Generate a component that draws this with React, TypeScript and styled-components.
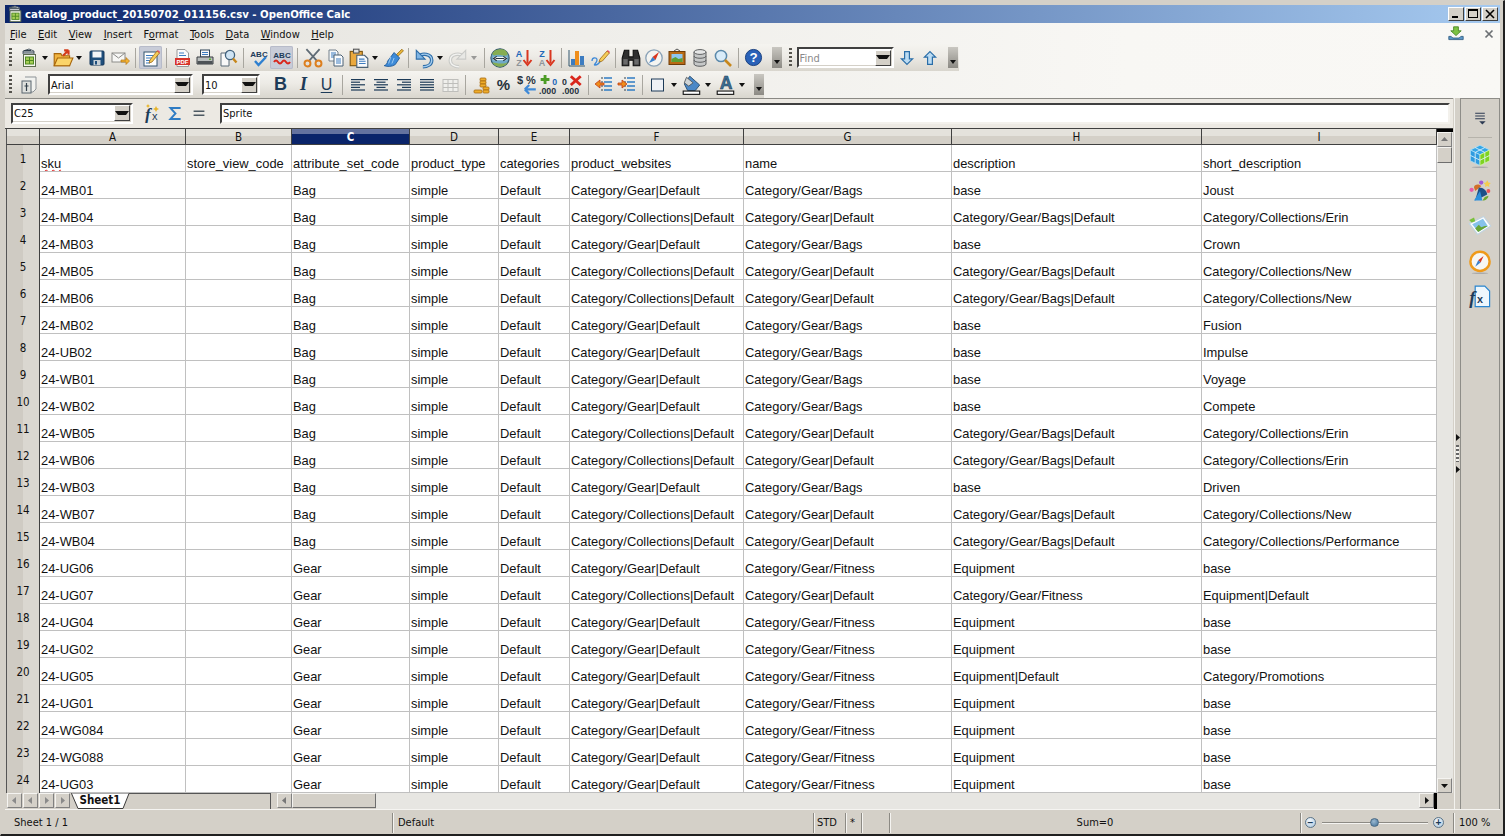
import React from 'react';
import styled, { createGlobalStyle } from 'styled-components';

const GlobalStyle = createGlobalStyle`
  html, body { margin: 0; padding: 0; background: #000; }
  * { box-sizing: border-box; }
`;

const UI_FONT = '"DejaVu Sans Condensed", "Noto Sans", sans-serif';
const CELL_FONT = '"Liberation Sans", Arial, sans-serif';

const Window = styled.div`
  width: 1505px;
  height: 836px;
  overflow: hidden;
  display: flex;
  flex-direction: column;
  background: #d4d0c8;
  padding: 4px 3px 0 4px;
  border-top: 1px solid #d4d0c8;
  border-left: 1px solid #d4d0c8;
  border-right: 2px solid #202020;
  border-bottom: 2px solid #202020;
  font-family: ${UI_FONT};
  color: #111;
`;

const TitleBar = styled.div`
  height: 18px;
  flex: none;
  display: flex;
  align-items: center;
  padding: 0 2px 0 1px;
  background: linear-gradient(90deg, #0a246a, #a6caf0);
  color: #fff;
  font-weight: 700;
  font-size: 11.3px;
`;

const TitleText = styled.span`
  flex: 1;
  margin-left: 1px;
`;

const WinButton = styled.div`
  width: 16px;
  height: 14px;
  margin-left: 1px;
  background: #d4d0c8;
  border: 1px solid;
  border-color: #fff #404040 #404040 #fff;
  display: flex;
  align-items: center;
  justify-content: center;
`;

const Chrome = styled.div`
  flex: none;
  background: linear-gradient(90deg, #e2e0da 0%, #eeede9 35%, #f8f7f4 75%, #f9f8f5 100%);
`;

const MenuBar = styled.div`
  height: 21px;
  display: flex;
  align-items: center;
  gap: 11.5px;
  padding: 1px 0 0 5px;
  font-size: 11px;
`;

const MenuItem = styled.span`
  u { text-decoration-thickness: 1px; text-underline-offset: 1px; }
`;

const MenuRight = styled.div`
  margin-left: auto;
  display: flex;
  align-items: center;
  gap: 20px;
  padding-right: 6px;
`;

const Toolbar = styled.div<{ $width: number }>`
  height: 27px;
  width: ${p => p.$width}px;
  display: flex;
  align-items: center;
  padding-left: 2px;
  background: linear-gradient(180deg, #f5f4f0 0%, #edebe6 45%, #d9d6ce 100%);
`;

const Grip = styled.div<{ $ml?: number }>`
  width: 3px;
  height: 19px;
  flex: none;
  margin-left: ${p => p.$ml ?? 2}px;
  margin-right: 5px;
  background: repeating-linear-gradient(180deg, #55534d 0 2px, transparent 2px 4px);
`;

const ToolButton = styled.div<{ $active?: boolean }>`
  width: 23px;
  height: 23px;
  flex: none;
  display: flex;
  align-items: center;
  justify-content: center;
  background: ${p => (p.$active ? '#c8ccd8' : 'transparent')};
  box-shadow: ${p => (p.$active ? 'inset 0 0 0 1px #b7bbc9' : 'none')};
  border-radius: 2px;
`;

const ArrowSlot = styled.div`
  width: 11px;
  height: 23px;
  flex: none;
  display: flex;
  align-items: center;
  padding-left: 2px;
`;

const DropTri = styled.span<{ $off?: boolean }>`
  width: 0;
  height: 0;
  border-left: 3.5px solid transparent;
  border-right: 3.5px solid transparent;
  border-top: 4px solid ${p => (p.$off ? '#9a9a98' : '#111')};
`;

const Sep = styled.div`
  width: 8px;
  height: 20px;
  flex: none;
  display: flex;
  justify-content: center;
  &::after { content: ''; width: 1px; background: #a8a69f; }
`;

const Overflow = styled.div<{ $ml: number }>`
  width: 10px;
  height: 21px;
  flex: none;
  margin-left: ${p => p.$ml}px;
  background: linear-gradient(180deg, #c9c7c1 0%, #8c8a84 100%);
  display: flex;
  align-items: flex-end;
  justify-content: center;
  padding-bottom: 4px;
`;

const Combo = styled.div<{ $width: number; $ml?: number; $mr?: number; $muted?: boolean }>`
  width: ${p => p.$width}px;
  height: 21px;
  flex: none;
  margin-left: ${p => p.$ml ?? 0}px;
  margin-right: ${p => p.$mr ?? 0}px;
  display: flex;
  align-items: center;
  background: #fff;
  border: 2px solid;
  border-color: #404040 #fff #fff #404040;
  box-shadow: inset -1px -1px 0 #d4d0c8;
  font-size: 11px;
  padding-left: 1px;
  color: ${p => (p.$muted ? '#8a8a8a' : '#111')};
  span { flex: 1; padding-top: 1px; }
`;

const ComboButton = styled.div`
  width: 16px;
  height: 16px;
  margin-right: 1px;
  background: #d4d0c8;
  border: 1px solid;
  border-color: #fff #404040 #404040 #fff;
  display: flex;
  align-items: center;
  justify-content: center;
`;

const GlyphB = styled.span`
  font: 700 18px ${CELL_FONT};
  color: #1d3b58;
`;
const GlyphI = styled.span`
  font: italic 700 18px "Liberation Serif", serif;
  color: #1d3b58;
`;
const GlyphU = styled.span`
  font: 400 16px ${CELL_FONT};
  color: #1d3b58;
  text-decoration: underline;
  text-underline-offset: 2px;
`;
const GlyphPct = styled.span`
  font: 700 15px ${CELL_FONT};
  color: #26323c;
`;

const FormulaBar = styled.div`
  height: 30px;
  flex: none;
  display: flex;
  align-items: center;
  padding: 0 3px 1px 6px;
  border-top: 1px solid #8a8984;
  background: #ece9e3;
`;

const FormulaIcons = styled.div`
  width: 87px;
  flex: none;
  display: flex;
  align-items: center;
  padding-left: 9px;
`;

const FormulaButton = styled.div<{ $ml?: number }>`
  width: 22px;
  height: 22px;
  flex: none;
  margin-left: ${p => p.$ml ?? 0}px;
  display: flex;
  align-items: center;
  justify-content: center;
`;

const FormulaInput = styled.div`
  flex: 1;
  height: 21px;
  background: #fff;
  border: 2px solid;
  border-color: #404040 #f3f1ec #f3f1ec #404040;
  font-size: 11px;
  display: flex;
  align-items: center;
  padding-left: 1px;
`;

const Workspace = styled.div`
  flex: 1;
  min-height: 0;
  display: flex;
  background: #d4d0c8;
`;

const Main = styled.div`
  flex: 1;
  min-width: 0;
  display: flex;
  flex-direction: column;
`;

const SheetArea = styled.div`
  flex: 1;
  min-height: 0;
  display: flex;
  padding-left: 1px;
  border-top: 1px solid #404040;
`;

const GridWrap = styled.div`
  width: 1431px;
  flex: none;
  display: flex;
  flex-direction: column;
`;

const Grid = styled.div`
  flex: 1;
  min-height: 0;
  overflow: hidden;
  display: grid;
  grid-template-columns: 34px 146px 106px 118px 89px 71px 174px 208px 250px 235px;
  grid-auto-rows: 27px;
  grid-template-rows: 16px;
  background: #fff;
  font: 400 12.9px ${CELL_FONT};
  color: #111;
`;

const Corner = styled.div`
  background: linear-gradient(180deg, #e4e2dc 0 7px, #d4d0c8 7px);
  border-left: 1px solid #555;
  border-bottom: 1px solid #404040;
  border-right: 1px solid #404040;
`;

const ColHead = styled.div<{ $selected?: boolean }>`
  display: flex;
  align-items: center;
  justify-content: center;
  font-size: 11.5px;
  padding-top: 1px;
  border-bottom: 1px solid #404040;
  border-right: 1px solid #404040;
  background: ${p =>
    p.$selected
      ? 'linear-gradient(180deg, #64729f 0 5px, #0a246a 5px)'
      : 'linear-gradient(180deg, #e4e2dc 0 7px, #d4d0c8 7px)'};
  color: ${p => (p.$selected ? '#fff' : '#111')};
  font-weight: ${p => (p.$selected ? 700 : 400)};
  font-family: ${UI_FONT};
`;

const RowHead = styled.div`
  background: linear-gradient(90deg, #cfcbc3 0 16px, #dad7d0 16px);
  border-left: 1px solid #555;
  border-right: 1px solid #404040;
  display: flex;
  align-items: center;
  justify-content: center;
  padding-top: 1px;
  font-size: 11.5px;
  font-family: ${UI_FONT};
`;

const Cell = styled.div`
  border-right: 1px solid #c0c0c0;
  border-bottom: 1px solid #c0c0c0;
  display: flex;
  align-items: flex-end;
  padding-left: 1px;
  white-space: nowrap;
  overflow: hidden;
  line-height: 15px;
`;

const Misspelled = styled.span`
  text-decoration: underline wavy #e02020 1px;
  text-underline-offset: 1px;
`;

const SheetStrip = styled.div`
  height: 16px;
  flex: none;
  display: flex;
  padding-left: 1px;
  background: #d4d0c8;
`;

const NavButton = styled.div`
  width: 15px;
  height: 15px;
  flex: none;
  margin-right: 1px;
  background: #d4d0c8;
  border: 1px solid;
  border-color: #f5f4f1 #808080 #808080 #f5f4f1;
  display: flex;
  align-items: center;
  justify-content: center;
`;

const TabArea = styled.div`
  width: 200px;
  flex: none;
  position: relative;
  border-top: 1px solid #555;
  border-right: 1px solid #555;
`;

const Tab = styled.div`
  position: absolute;
  left: 0;
  top: -1px;
  width: 58px;
  height: 16px;
  font: 700 11.5px/15px ${UI_FONT};
  text-align: center;
`;

const TabOutline = styled.svg`
  position: absolute;
  left: 0;
  top: -1px;
`;

const HScrollSpacer = styled.div`
  width: 6px;
  flex: none;
`;

const ScrollButton = styled.div`
  width: 15px;
  height: 15px;
  flex: none;
  background: #d4d0c8;
  border: 1px solid;
  border-color: #f5f4f1 #808080 #808080 #f5f4f1;
  display: flex;
  align-items: center;
  justify-content: center;
`;

const ScrollThumb = styled.div<{ $w: number; $h: number }>`
  flex: none;
  width: ${p => p.$w}px;
  height: ${p => p.$h}px;
  background: #d4d0c8;
  border: 1px solid;
  border-color: #f5f4f1 #6e6e6e #6e6e6e #f5f4f1;
`;

const HTrack = styled.div`
  flex: 1;
  display: flex;
  justify-content: flex-end;
  background: #e7e6e2;
`;

const BlackEdge = styled.div`
  width: 3px;
  height: 16px;
  background: #000;
  flex: none;
`;

const VCol = styled.div`
  width: 16px;
  flex: none;
  background: #d4d0c8;
  display: flex;
  flex-direction: column;
`;

const VScroll = styled.div`
  flex: 1;
  min-height: 0;
  display: flex;
  flex-direction: column;
  border-top: 3px solid #000;
  margin-bottom: 16px;
  background: #e7e6e2;
`;

const VTrack = styled.div`
  flex: 1;
`;

const Splitter = styled.div`
  width: 7px;
  flex: none;
  margin-left: 1px;
  border-right: 1px solid #8e8d88;
  border-left: 1px solid #f3f2ee;
  display: flex;
  flex-direction: column;
  align-items: center;
  justify-content: center;
  gap: 2px;
  color: #111;
`;

const SplitDots = styled.div`
  width: 3px;
  height: 17px;
  background: repeating-linear-gradient(180deg, #666 0 2px, #f3f2ee 2px 4px);
`;

const Sidebar = styled.div`
  width: 39px;
  flex: none;
  display: flex;
  flex-direction: column;
  align-items: center;
  padding-top: 11px;
  border-right: 1px solid #8e8d88;
  border-top: 1px solid #8e8d88;
  background: #d4d0c8;
`;

const SideRule = styled.div`
  width: 24px;
  height: 1px;
  flex: none;
  background: #b6b3ab;
  margin-top: 11px;
`;

const SideIcon = styled.div`
  height: 35.3px;
  flex: none;
  display: flex;
  align-items: center;
  justify-content: center;
`;

const StatusBar = styled.div`
  height: 25px;
  flex: none;
  display: flex;
  align-items: center;
  padding-top: 1px;
  font-size: 11px;
  border-top: 1px solid #f5f4f1;
  background: #d4d0c8;
`;

const StatusCell = styled.div<{ $w: number; $center?: boolean; $pl?: number; $noBorder?: boolean }>`
  width: ${p => p.$w}px;
  flex: none;
  height: 20px;
  display: flex;
  align-items: center;
  justify-content: ${p => (p.$center ? 'center' : 'flex-start')};
  padding-left: ${p => p.$pl ?? 0}px;
  border-right: ${p => (p.$noBorder ? 'none' : '1px solid #8c8a84')};
  box-shadow: ${p => (p.$noBorder ? 'none' : '1px 0 0 #f5f4f1')};
`;

const ZoomTrack = styled.div`
  flex: 1;
  height: 2px;
  margin: 0 5px 0 6px;
  background: #8c8a84;
  border-bottom: 1px solid #f5f4f1;
  position: relative;
`;

const ZoomThumb = styled.div`
  position: absolute;
  left: 48px;
  top: -4px;
  width: 9px;
  height: 9px;
  border-radius: 50%;
  background: radial-gradient(circle at 40% 35%, #9ab8d0, #3f6f96);
  border: 1px solid #4a6a85;
`;

const ZoomRound = styled.div<{ $ml?: number; $mr?: number }>`
  width: 11px;
  height: 11px;
  flex: none;
  margin-left: ${p => p.$ml ?? 0}px;
  margin-right: ${p => p.$mr ?? 0}px;
  border-radius: 50%;
  background: radial-gradient(circle at 40% 30%, #f2f7fb, #a9c6de);
  border: 1px solid #5b7488;
  display: flex;
  align-items: center;
  justify-content: center;
  font: 700 10px/9px ${CELL_FONT};
  color: #1b3a57;
`;

const Flipped = styled.span`
  display: flex;
  transform: scaleX(-1);
`;

/* small helper for the toolbar pictures, everything on a 20x20 box */
const Ico = ({ s = 20, children }: { s?: number; children: React.ReactNode }) => (
  <svg width={s} height={s} viewBox="0 0 20 20" fill="none">{children}</svg>
);

const Tri = ({ dir, color = '#111' }: { dir: 'l' | 'r' | 'u' | 'd'; color?: string }) => {
  const pts = { l: '7,2 7,9 3,5.5', r: '4,2 4,9 8,5.5', u: '2,7 9,7 5.5,3', d: '2,4 9,4 5.5,8' }[dir];
  return (
    <svg width="11" height="11" viewBox="0 0 11 11"><polygon points={pts} fill={color} /></svg>
  );
};

const NewIcon = ({ s = 20 }: { s?: number }) => (
  <Ico s={s}>
    <path d="M4 3 L10 1 L15 3 L15 6 L4 6Z" fill="#dfe3e6" stroke="#55606a" />
    <path d="M4 4h11M5 2.500h7" stroke="#30404d" />
    <rect x="4.500" y="6.500" width="12" height="12" fill="#f6f7ef" stroke="#5c6b50" />
    <rect x="6.500" y="9" width="8" height="7" fill="#a5cd55" stroke="#4f8a22" />
    <path d="M10.500 9v7M6.500 12.500h8" stroke="#4f8a22" />
  </Ico>
);
const OpenIcon = () => (
  <Ico s={22}>
    <path d="M2 6h6l1 2h7v9H2Z" fill="#f0b440" stroke="#a8660a" />
    <path d="M2 17 L5 10 H19 L16 17Z" fill="#fbd469" stroke="#a8660a" />
    <path d="M10 8 L15 3M15 3h-4M15 3v4" stroke="#d43c1a" strokeWidth="2" />
  </Ico>
);
const SaveIcon = () => (
  <Ico>
    <rect x="3" y="3" width="14" height="14" rx="1" fill="#1f4f7c" stroke="#14375a" />
    <rect x="5.500" y="3.500" width="9" height="6" fill="#f4f6f8" />
    <rect x="6.500" y="12" width="7" height="5" fill="#c7cfd6" />
    <rect x="8" y="13" width="2" height="3.500" fill="#1f4f7c" />
  </Ico>
);
const MailIcon = () => (
  <Ico>
    <rect x="2" y="5" width="13" height="9" fill="#f7f7f5" stroke="#8b8b88" />
    <path d="M2 5l6.500 5L15 5" stroke="#8b8b88" />
    <path d="M11 12h5v-2.500l3.500 3.500-3.500 3.500V14h-5Z" fill="#f2b233" stroke="#b37212" strokeWidth=".7" />
  </Ico>
);
const EditIcon = () => (
  <Ico>
    <rect x="3" y="4" width="13" height="14" fill="#fdfdfd" stroke="#34546f" />
    <path d="M5 7.500h7M5 10h6M5 12.500h4M5 15h4" stroke="#3d7cc0" />
    <path d="M8 15l1-3L16 3l2.500 2L11 14Z" fill="#f5cd5a" stroke="#a06a15" strokeWidth=".8" />
    <path d="M16 3l2.500 2 .7-1-2.400-2Z" fill="#e84a5f" />
  </Ico>
);
const PdfIcon = () => (
  <Ico>
    <path d="M5 1.500h8l3.500 3.500V18.500H5Z" fill="#fbfbfb" stroke="#999" />
    <path d="M7 5h5M7 7.500h7" stroke="#3d7cc0" />
    <rect x="3" y="10" width="15" height="7" fill="#d8342a" />
    <text x="10.500" y="16" fontFamily="Liberation Sans" fontWeight="700" fontSize="6" fill="#fff" textAnchor="middle">PDF</text>
  </Ico>
);
const PrintIcon = () => (
  <Ico>
    <rect x="5.500" y="2" width="9" height="7" fill="#f8f8f8" stroke="#2f4356" />
    <path d="M7 4.500h6M7 6.500h6" stroke="#3d7cc0" />
    <path d="M2 9h16v7H2Z" fill="#b8bcbc" stroke="#3b3f42" />
    <rect x="2.500" y="13" width="15" height="3" fill="#4d5256" />
    <rect x="14" y="10.500" width="2" height="1.500" fill="#58b130" />
  </Ico>
);
const PreviewIcon = () => (
  <Ico>
    <path d="M3 5h8v13H3Z" fill="#f8f8f8" stroke="#5a6b78" />
    <circle cx="12" cy="7" r="4.600" fill="#cfe4f4" stroke="#41627e" strokeWidth="1.300" />
    <path d="M15 10.500l3.500 4" stroke="#c7871b" strokeWidth="2.400" />
  </Ico>
);
const AbcText = ({ y = 9 }: { y?: number }) => (
  <text x="10" y={y} textAnchor="middle" fontFamily="Liberation Sans" fontWeight="700" fontSize="8" fill="#1d3b58">ABC</text>
);
const SpellIcon = () => (
  <Ico>
    <AbcText />
    <path d="M6 13l3.500 4L17 9" stroke="#2f80d0" strokeWidth="2.400" />
  </Ico>
);
const AutoSpellIcon = () => (
  <Ico>
    <AbcText y={10} />
    <path d="M2 14q2-3 4 0t4 0 4 0 4 0" stroke="#d9261c" strokeWidth="2" />
  </Ico>
);
const CutIcon = () => (
  <Ico s={22}>
    <path d="M4 2l10 11M16 2L6 13" stroke="#5f6b75" strokeWidth="1.600" />
    <circle cx="5" cy="15" r="2.700" stroke="#dd7f1e" strokeWidth="1.800" />
    <circle cx="15" cy="15" r="2.700" stroke="#dd7f1e" strokeWidth="1.800" />
  </Ico>
);
const CopyIcon = () => (
  <Ico>
    <path d="M3 2h7l2 2v9H3Z" fill="#f7f9fb" stroke="#74818c" />
    <path d="M5 5h5M5 7h5M5 9h3" stroke="#3d7cc0" />
    <path d="M8 7h7l2 2v9H8Z" fill="#fbfcfd" stroke="#4a6175" />
    <path d="M10 11h5M10 13h5M10 15h5" stroke="#3d7cc0" />
  </Ico>
);
const PasteIcon = () => (
  <Ico s={22}>
    <rect x="2" y="4" width="11" height="13" fill="#eaa93e" stroke="#7d5510" />
    <rect x="5" y="2" width="5" height="3.500" fill="#dfe2e3" stroke="#555" />
    <path d="M8 7.500h7l3 3v8H8Z" fill="#f8fafc" stroke="#4a6175" />
    <path d="M10 11h5M10 13h6M10 15h6" stroke="#3d7cc0" />
  </Ico>
);
const BrushIcon = () => (
  <Ico s={22}>
    <path d="M13 7l5-5 1.500 1.500-5 5Z" fill="#e7b438" stroke="#94680f" strokeWidth=".7" />
    <path d="M11 5l5 5-4 6c-3 2-7 2-10 1 2-1 3-2 3-4Z" fill="#3e8bd8" stroke="#1d5998" strokeWidth=".8" />
    <path d="M8 9l-2 6M11 10l-2 5" stroke="#a9d2f2" strokeWidth=".8" />
  </Ico>
);
const UndoIcon = ({ off }: { off?: boolean }) => {
  const c = off ? '#c9cac7' : '#2d6da8';
  return (
    <Ico s={22}>
      <path d="M5 9c3-4 12-3 12 3 0 4-4 6-8 6" stroke={c} strokeWidth="3.200" />
      <path d="M5 9c3-4 12-3 12 3 0 4-4 6-8 6" stroke={off ? '#f3f3f1' : '#a5cdee'} strokeWidth="1.200" />
      <path d="M3 3v8h8Z" fill={off ? '#e8e8e5' : '#7fb5e4'} stroke={c} />
    </Ico>
  );
};
const GlobeIcon = () => (
  <Ico s={22}>
    <circle cx="10" cy="10" r="8.300" fill="#6fa9c9" stroke="#32566d" />
    <path d="M3 6c2-4 6-4 9-4s5 3 5 5c-3 2-5 0-8 0S4 9 3 6Z" fill="#86ad52" />
    <path d="M3 14c3 0 5 1 7 1s4 0 7-1c-1 2-4 4-7 4s-6-2-7-4Z" fill="#86ad52" />
    <path d="M4 10.500h12" stroke="#f3f5f5" strokeWidth="3" />
    <path d="M7 8.500l-3 2 3 2M13 8.500l3 2-3 2M6 10.500h8" stroke="#27333c" strokeWidth="1" />
  </Ico>
);
const SortIcon = ({ top, bottom }: { top: string; bottom: string }) => (
  <Ico>
    <text x="6" y="8.500" textAnchor="middle" fontFamily="Liberation Sans" fontWeight="700" fontSize="9" fill="#2268b8">{top}</text>
    <text x="6" y="18" textAnchor="middle" fontFamily="Liberation Sans" fontWeight="700" fontSize="9" fill="#8f9498">{bottom}</text>
    <path d="M14.500 2v13" stroke="#d9361f" strokeWidth="2" />
    <path d="M10.500 12l4 5 4-5" stroke="#d9361f" strokeWidth="2" />
  </Ico>
);
const ChartIcon = () => (
  <Ico>
    <path d="M2 2v16h16" stroke="#33566f" />
    <rect x="4" y="11" width="4" height="6" fill="#3d7cc0" />
    <rect x="8" y="3" width="4" height="14" fill="#ef8e1c" />
    <rect x="13" y="8" width="4" height="9" fill="#3d7cc0" />
  </Ico>
);
const DrawIcon = () => (
  <Ico>
    <path d="M2 13c0-4 5-4 5-1s-4 5-2 5 5-2 6-5" stroke="#3f8ad8" strokeWidth="1.300" />
    <path d="M9 14l1-3 7-8 2.400 2-7 8Z" fill="#f5cd5a" stroke="#a06a15" strokeWidth=".8" />
    <path d="M17 3l2.400 2 .6-1-2.300-2Z" fill="#e84a5f" />
  </Ico>
);
const BinocularIcon = () => (
  <Ico s={22}>
    <path d="M4 3h4v6h4V3h4l2 7v7h-6v-5H8v5H2v-7Z" fill="#2f2f2f" stroke="#111" />
    <rect x="3" y="11" width="4" height="5" fill="#6a6a6a" />
    <rect x="13" y="11" width="4" height="5" fill="#6a6a6a" />
  </Ico>
);
const CompassIcon = () => (
  <Ico s={20}>
    <circle cx="10" cy="10" r="8.200" fill="#f4f4f1" stroke="#8aa2b7" strokeWidth="1.300" />
    <path d="M15 4l-3.500 8-3-3Z" fill="#d9361f" />
    <path d="M5 15l3.500-6 3 3Z" fill="#3a7fc9" />
  </Ico>
);
const PictureIcon = () => (
  <Ico s={20}>
    <path d="M7 3l3-2 3 2" stroke="#555" />
    <rect x="2" y="3.500" width="16" height="13" fill="#b96a14" stroke="#6e3d09" />
    <rect x="4.500" y="6" width="11" height="8" fill="#8ec6ee" />
    <path d="M4.500 14v-3l4-2 3 2 4-1v4Z" fill="#5d9e33" />
  </Ico>
);
const DbIcon = () => (
  <Ico s={20}>
    <path d="M4 4v12c0 3 12 3 12 0V4" fill="#c6c8c8" stroke="#5d5f60" />
    <ellipse cx="10" cy="4" rx="6" ry="2.400" fill="#e5e6e6" stroke="#5d5f60" />
    <path d="M4 8c0 3 12 3 12 0M4 12c0 3 12 3 12 0" stroke="#5d5f60" />
  </Ico>
);
const ZoomIcon = () => (
  <Ico s={20}>
    <circle cx="8" cy="8" r="5.600" fill="#d9ecf9" stroke="#5a89ab" strokeWidth="1.500" />
    <path d="M12 12l6 6" stroke="#c7871b" strokeWidth="2.600" />
  </Ico>
);
const HelpIcon = () => (
  <Ico s={19}>
    <circle cx="10" cy="10" r="8.500" fill="#2a62b8" stroke="#173d7c" />
    <text x="10" y="15" textAnchor="middle" fontFamily="Liberation Sans" fontWeight="700" fontSize="14" fill="#fff">?</text>
  </Ico>
);
const ArrowV = ({ up }: { up?: boolean }) => (
  <Ico s={16}>
    <path
      d={up ? 'M10 2l7 7h-4v9H7V9H3Z' : 'M10 18l7-7h-4V2H7v9H3Z'}
      fill="#bcdcf3"
      stroke="#2b6ea8"
      strokeWidth="1.500"
    />
  </Ico>
);
const StyleIcon = () => (
  <Ico>
    <path d="M6 2h11v12l-3 3H8" fill="#f1f2ef" stroke="#8d9397" />
    <rect x="3" y="6" width="9" height="12" fill="#dfe1de" stroke="#58656f" />
    <path d="M7.500 8v8M5.500 11h4" stroke="#33404b" strokeWidth="1.200" />
  </Ico>
);
const AlignIcon = ({ kind }: { kind: 'l' | 'c' | 'r' | 'j' }) => {
  const rows = [14, 9, 14, 9, 14];
  return (
    <Ico>
      {rows.map((w, i) => {
        const width = kind === 'j' ? 14 : w;
        const x = kind === 'l' || kind === 'j' ? 3 : kind === 'c' ? 10 - width / 2 : 17 - width;
        return <rect key={i} x={x} y={4 + i * 2.600} width={width} height="1.200" fill="#1d3b58" />;
      })}
    </Ico>
  );
};
const TableIcon = () => (
  <Ico>
    <rect x="3" y="4.500" width="15" height="12" fill="#efefec" stroke="#bebebb" />
    <path d="M3 8.500h15M3 12.500h15M8 4.500v12M13 4.500v12" stroke="#bebebb" />
  </Ico>
);
const CoinsIcon = () => (
  <Ico>
    <g fill="#eead2c" stroke="#a76a10" strokeWidth=".8">
      <rect x="9" y="3" width="6" height="3" rx="1" />
      <rect x="9" y="6" width="6" height="3" rx="1" />
      <rect x="9" y="9" width="6" height="3" rx="1" />
      <rect x="12" y="12" width="6" height="3" rx="1" />
      <rect x="12" y="15" width="6" height="3" rx="1" />
      <rect x="3" y="15" width="8" height="3" rx="1" />
    </g>
  </Ico>
);
const CurrencyIcon = () => (
  <Ico s={22}>
    <text x="1" y="9" fontFamily="Liberation Sans" fontWeight="700" fontSize="10" fill="#26323c">$</text>
    <text x="9" y="9" fontFamily="Liberation Sans" fontWeight="700" fontSize="10" fill="#26323c">%</text>
    <path d="M18 14H8M8 14l4-4M8 14l4 4" stroke="#3f8ad8" strokeWidth="2" />
  </Ico>
);
const DecimalIcon = ({ add }: { add?: boolean }) => (
  <Ico s={22}>
    {add ? (
      <path d="M5.500 1v8M1.500 5h8" stroke="#4d9c25" strokeWidth="2.600" />
    ) : (
      <path d="M8 2l9 8M17 2l-9 8" stroke="#d9261c" strokeWidth="2.600" />
    )}
    <text x={add ? 12 : 0} y="10" fontFamily="Liberation Sans" fontWeight="700" fontSize="8" fill={add ? '#2268b8' : '#26323c'}>0</text>
    <text x="0" y="18" fontFamily="Liberation Sans" fontWeight="700" fontSize="8" fill="#26323c">.000</text>
  </Ico>
);
const IndentIcon = ({ more }: { more?: boolean }) => (
  <Ico s={20}>
    <path d="M10 3h8M10 7h8M10 11h8M10 15h8" stroke="#2f7cc4" strokeWidth="1.400" />
    <path d="M8 2v16" stroke="#33404b" strokeDasharray="2 2" />
    <path
      d={more ? 'M1 8h4V5l5 4-5 4v-3H1Z' : 'M10 8H6V5L1 9l5 4v-3h4Z'}
      fill="#ef8e1c"
      stroke="#c23b15"
      strokeWidth=".8"
    />
  </Ico>
);
const BorderIcon = () => (
  <Ico>
    <rect x="3.500" y="4" width="12" height="12" fill="#eef1f6" stroke="#1d3b58" />
  </Ico>
);
const BucketIcon = () => (
  <Ico s={22}>
    <path d="M8 2l9 8-4 5H6L3 9Z" fill="#4b88c7" stroke="#254a6c" strokeWidth=".8" />
    <path d="M5 3l6 5-4 3-4-3Z" fill="#cfd4d6" stroke="#50565a" strokeWidth=".8" />
    <rect x="2" y="15.500" width="15" height="3" fill="#fff" stroke="#111" />
  </Ico>
);
const FontColorIcon = () => (
  <Ico s={22}>
    <text x="10" y="14" textAnchor="middle" fontFamily="Liberation Sans" fontWeight="700" fontSize="16" fill="#3c6e92" stroke="#1d3b58" strokeWidth=".5">A</text>
    <rect x="2" y="15.500" width="15" height="3" fill="#fff" stroke="#111" />
  </Ico>
);
const FxIcon = () => (
  <Ico s={20}>
    <text x="2" y="17" fontFamily="Liberation Serif" fontStyle="italic" fontWeight="700" fontSize="17" fill="#1d3b58">f</text>
    <text x="9" y="17" fontFamily="Liberation Sans" fontSize="11" fill="#1d3b58">x</text>
    <path d="M13 3l1 2 2 1-2 1-1 2-1-2-2-1 2-1ZM5 1l.7 1.300L7 3l-1.300.7L5 5l-.7-1.300L3 3l1.300-.7Z" fill="#e8b52b" />
  </Ico>
);
const SigmaIcon = () => (
  <Ico s={17}>
    <path d="M16 3.500H4l6 6.500-6 6.500h12" stroke="#2f7cc4" strokeWidth="2.200" />
  </Ico>
);
const EqualsIcon = () => (
  <Ico s={18}>
    <path d="M4 8h12M4 12.500h12" stroke="#4d5962" strokeWidth="1.800" />
  </Ico>
);
const ExtensionIcon = () => (
  <Ico s={16}>
    <path d="M7 1h6v5h3.500L10 12 3.500 6H7Z" fill="#7cc242" stroke="#3f7e19" />
    <path d="M1 13h3l2 2h8l2-2h3v4H1Z" fill="#5b96c6" stroke="#28567c" />
  </Ico>
);
const CloseDoc = () => (
  <Ico s={10}>
    <path d="M3 3l14 14M17 3L3 17" stroke="#6c7074" strokeWidth="3.400" />
  </Ico>
);
const MenuLinesIcon = () => (
  <Ico s={16}>
    <path d="M4 4h12M4 7.500h12M4 11h12" stroke="#2c3a52" strokeWidth="1.400" />
    <polygon points="9,14 17,14 13,18" fill="#2c3a52" />
  </Ico>
);
const CubeIcon = () => (
  <Ico s={24}>
    <path d="M2 5l8-4 8 4-8 4Z" fill="#35a6e6" stroke="#a9dcf6" strokeWidth=".7" />
    <path d="M2 5l8 4v9l-8-4Z" fill="#2f9ce0" stroke="#a9dcf6" strokeWidth=".7" />
    <path d="M18 5l-8 4v9l8-4Z" fill="#7ed321" stroke="#d4f3a8" strokeWidth=".7" />
    <path d="M6 3l8 4M14 3L6 7M2 9.500l8 4 8-4M6 7v9M14 7v9" stroke="#e2f3fb" strokeWidth=".7" />
    <ellipse cx="10" cy="19.400" rx="7" ry=".6" fill="#aaa" />
  </Ico>
);
const StylesIcon = () => (
  <Ico s={24}>
    <path d="M5 7c0-3 5-3 6-1l-5 4Z" fill="#d2702a" />
    <path d="M6 18L9 7c4 0 7 3 7 6l-4 2Z" fill="#1d4f87" />
    <path d="M5 18l5-8 2 8Z" fill="#2f90dc" />
    <path d="M12 18c3 0 5-2 5-4l-3 1Z" fill="#6ea830" />
    <circle cx="3" cy="9" r="1.800" fill="#e95ca7" />
    <circle cx="11" cy="3" r="1.800" fill="#a25bd6" />
    <circle cx="17" cy="10" r="1.600" fill="#ea5458" />
    <path d="M16 1l1 2 2 .3-1.500 1.400.4 2L16 5.800 14.100 6.700l.4-2L13 3.300 15 3Z" fill="#f4cd4d" />
  </Ico>
);
const GalleryIcon = () => (
  <Ico s={24}>
    <path d="M1 8L13 2l6 8-11 7Z" fill="#fdfefe" stroke="#c2d3de" />
    <path d="M3.500 8.500L12.500 4l4 6-8 5Z" fill="#86c2ea" />
    <path d="M6 12l3-3 2 2 3-1 2.500 0-8 5Z" fill="#68a636" />
    <path d="M1 5l4-2 1 3-3 1Z" fill="#7ac13c" />
  </Ico>
);
const OrangeCompass = () => (
  <Ico s={24}>
    <circle cx="10" cy="9.500" r="8" fill="#f7f7f4" stroke="#ef9a1a" strokeWidth="2" />
    <path d="M13 5l-2.500 5.500-2-2Z" fill="#d9361f" />
    <path d="M6 14l2.500-5.500 2 2Z" fill="#3a7fc9" />
    <ellipse cx="10" cy="19.300" rx="7" ry=".6" fill="#aaa" />
  </Ico>
);
const FunctionsIcon = () => (
  <Ico s={24}>
    <path d="M6 1h8l4 4v13H6Z" fill="#eef7fd" stroke="#2a86d0" />
    <text x="1" y="16" fontFamily="Liberation Serif" fontStyle="italic" fontWeight="700" fontSize="15" fill="#1d3b58">f</text>
    <text x="7.500" y="15" fontFamily="Liberation Sans" fontWeight="700" fontSize="9" fill="#1d3b58">x</text>
  </Ico>
);
const TabShape = () => (
  <TabOutline width="62" height="17" viewBox="0 0 62 17">
    <path d="M0.500 0.500 L7 15.500 H52 L58 0.500" fill="#fff" stroke="#3a3a3a" />
  </TabOutline>
);

const CAT_GEAR = 'Category/Gear|Default';
const CAT_COLL = 'Category/Collections|Default';
const BAGS = 'Category/Gear/Bags';
const BAGS_DEF = 'Category/Gear/Bags|Default';
const FIT = 'Category/Gear/Fitness';

const rows: string[][] = [
  ['24-MB01', 'Bag', CAT_GEAR, BAGS, 'base', 'Joust'],
  ['24-MB04', 'Bag', CAT_COLL, CAT_GEAR, BAGS_DEF, 'Category/Collections/Erin'],
  ['24-MB03', 'Bag', CAT_GEAR, BAGS, 'base', 'Crown'],
  ['24-MB05', 'Bag', CAT_COLL, CAT_GEAR, BAGS_DEF, 'Category/Collections/New'],
  ['24-MB06', 'Bag', CAT_COLL, CAT_GEAR, BAGS_DEF, 'Category/Collections/New'],
  ['24-MB02', 'Bag', CAT_GEAR, BAGS, 'base', 'Fusion'],
  ['24-UB02', 'Bag', CAT_GEAR, BAGS, 'base', 'Impulse'],
  ['24-WB01', 'Bag', CAT_GEAR, BAGS, 'base', 'Voyage'],
  ['24-WB02', 'Bag', CAT_GEAR, BAGS, 'base', 'Compete'],
  ['24-WB05', 'Bag', CAT_COLL, CAT_GEAR, BAGS_DEF, 'Category/Collections/Erin'],
  ['24-WB06', 'Bag', CAT_COLL, CAT_GEAR, BAGS_DEF, 'Category/Collections/Erin'],
  ['24-WB03', 'Bag', CAT_GEAR, BAGS, 'base', 'Driven'],
  ['24-WB07', 'Bag', CAT_COLL, CAT_GEAR, BAGS_DEF, 'Category/Collections/New'],
  ['24-WB04', 'Bag', CAT_COLL, CAT_GEAR, BAGS_DEF, 'Category/Collections/Performance'],
  ['24-UG06', 'Gear', CAT_GEAR, FIT, 'Equipment', 'base'],
  ['24-UG07', 'Gear', CAT_COLL, CAT_GEAR, 'Category/Gear/Fitness', 'Equipment|Default'],
  ['24-UG04', 'Gear', CAT_GEAR, FIT, 'Equipment', 'base'],
  ['24-UG02', 'Gear', CAT_GEAR, FIT, 'Equipment', 'base'],
  ['24-UG05', 'Gear', CAT_GEAR, FIT, 'Equipment|Default', 'Category/Promotions'],
  ['24-UG01', 'Gear', CAT_GEAR, FIT, 'Equipment', 'base'],
  ['24-WG084', 'Gear', CAT_GEAR, FIT, 'Equipment', 'base'],
  ['24-WG088', 'Gear', CAT_GEAR, FIT, 'Equipment', 'base'],
  ['24-UG03', 'Gear', CAT_GEAR, FIT, 'Equipment', 'base'],
];

const columns = ['A', 'B', 'C', 'D', 'E', 'F', 'G', 'H', 'I'];
const headers = ['store_view_code', 'attribute_set_code', 'product_type', 'categories', 'product_websites', 'name', 'description', 'short_description'];

// lead is what comes before the underlined letter
const menus: [string, string, string][] = [
  ['', 'F', 'ile'], ['', 'E', 'dit'], ['', 'V', 'iew'], ['', 'I', 'nsert'], ['F', 'o', 'rmat'],
  ['', 'T', 'ools'], ['', 'D', 'ata'], ['', 'W', 'indow'], ['', 'H', 'elp'],
];

const Arrow = ({ off }: { off?: boolean }) => (
  <ArrowSlot><DropTri $off={off} /></ArrowSlot>
);

const Btn = ({ children, active }: { children: React.ReactNode; active?: boolean }) => (
  <ToolButton $active={active}>{children}</ToolButton>
);

const ComboDown = () => (
  <ComboButton><DropTri /></ComboButton>
);

const StandardBar = () => (
  <Toolbar $width={954}>
    <Grip />
    <Btn><NewIcon /></Btn><Arrow />
    <Btn><OpenIcon /></Btn><Arrow />
    <Btn><SaveIcon /></Btn>
    <Btn><MailIcon /></Btn>
    <Sep />
    <Btn active><EditIcon /></Btn>
    <Sep />
    <Btn><PdfIcon /></Btn>
    <Btn><PrintIcon /></Btn>
    <Btn><PreviewIcon /></Btn>
    <Sep />
    <Btn><SpellIcon /></Btn>
    <Btn active><AutoSpellIcon /></Btn>
    <Sep />
    <Btn><CutIcon /></Btn>
    <Btn><CopyIcon /></Btn>
    <Btn><PasteIcon /></Btn><Arrow />
    <Btn><BrushIcon /></Btn>
    <Sep />
    <Btn><UndoIcon /></Btn><Arrow />
    <Btn><Flipped><UndoIcon off /></Flipped></Btn><Arrow off />
    <Sep />
    <Btn><GlobeIcon /></Btn>
    <Btn><SortIcon top="A" bottom="Z" /></Btn>
    <Btn><SortIcon top="Z" bottom="A" /></Btn>
    <Sep />
    <Btn><ChartIcon /></Btn>
    <Btn><DrawIcon /></Btn>
    <Sep />
    <Btn><BinocularIcon /></Btn>
    <Btn><CompassIcon /></Btn>
    <Btn><PictureIcon /></Btn>
    <Btn><DbIcon /></Btn>
    <Btn><ZoomIcon /></Btn>
    <Sep />
    <Btn><HelpIcon /></Btn>
    <Overflow $ml={6.5}><DropTri /></Overflow>
    <Grip $ml={7} />
    <Combo $width={97} $mr={1.5} $muted><span>Find</span><ComboDown /></Combo>
    <Btn><ArrowV /></Btn>
    <Btn><ArrowV up /></Btn>
    <Overflow $ml={6.5}><DropTri /></Overflow>
  </Toolbar>
);

const FormatBar = () => (
  <Toolbar $width={759}>
    <Grip />
    <Btn><StyleIcon /></Btn>
    <Combo $width={145} $ml={8}><span>Arial</span><ComboDown /></Combo>
    <Combo $width={58} $ml={9} $mr={9}><span>10</span><ComboDown /></Combo>
    <Btn><GlyphB>B</GlyphB></Btn>
    <Btn><GlyphI>I</GlyphI></Btn>
    <Btn><GlyphU>U</GlyphU></Btn>
    <Sep />
    <Btn><AlignIcon kind="l" /></Btn>
    <Btn><AlignIcon kind="c" /></Btn>
    <Btn><AlignIcon kind="r" /></Btn>
    <Btn><AlignIcon kind="j" /></Btn>
    <Btn><TableIcon /></Btn>
    <Sep />
    <Btn><CoinsIcon /></Btn>
    <Btn><GlyphPct>%</GlyphPct></Btn>
    <Btn><CurrencyIcon /></Btn>
    <Btn><DecimalIcon add /></Btn>
    <Btn><DecimalIcon /></Btn>
    <Sep />
    <Btn><IndentIcon /></Btn>
    <Btn><IndentIcon more /></Btn>
    <Sep />
    <Btn><BorderIcon /></Btn><Arrow />
    <Btn><BucketIcon /></Btn><Arrow />
    <Btn><FontColorIcon /></Btn><Arrow />
    <Overflow $ml={5.5}><DropTri /></Overflow>
  </Toolbar>
);

export default function App() {
  return (
    <>
      <GlobalStyle />
      <Window>
        <TitleBar>
          <NewIcon s={18} />
          <TitleText>catalog_product_20150702_011156.csv - OpenOffice Calc</TitleText>
          <WinButton><svg width="10" height="10"><rect x="1" y="7" width="6" height="2" fill="#000" /></svg></WinButton>
          <WinButton><svg width="10" height="10"><rect x=".5" y=".5" width="9" height="8" fill="none" stroke="#000" /><rect x="0" y="0" width="10" height="2" fill="#000" /></svg></WinButton>
          <WinButton><svg width="10" height="10"><path d="M1 1l8 8M9 1l-8 8" stroke="#000" strokeWidth="1.600" /></svg></WinButton>
        </TitleBar>
        <Chrome>
          <MenuBar>
            {menus.map(([lead, key, rest]) => (
              <MenuItem key={rest}>{lead}<u>{key}</u>{rest}</MenuItem>
            ))}
            <MenuRight>
              <ExtensionIcon />
              <CloseDoc />
            </MenuRight>
          </MenuBar>
          <StandardBar />
          <FormatBar />
        </Chrome>
        <Workspace>
          <Main>
            <FormulaBar>
              <Combo $width={122}><span>C25</span><ComboDown /></Combo>
              <FormulaIcons>
                <FormulaButton><FxIcon /></FormulaButton>
                <FormulaButton><SigmaIcon /></FormulaButton>
                <FormulaButton $ml={2}><EqualsIcon /></FormulaButton>
              </FormulaIcons>
              <FormulaInput>Sprite</FormulaInput>
            </FormulaBar>
            <SheetArea>
              <GridWrap>
                <Grid>
                  <Corner />
                  {columns.map(c => <ColHead key={c} $selected={c === 'C'}>{c}</ColHead>)}
                  <RowHead>1</RowHead>
                  <Cell><Misspelled>sku</Misspelled></Cell>
                  {headers.map(h => <Cell key={h}>{h}</Cell>)}
                  {rows.map((r, i) => (
                    <React.Fragment key={r[0]}>
                      <RowHead>{i + 2}</RowHead>
                      <Cell>{r[0]}</Cell>
                      <Cell />
                      <Cell>{r[1]}</Cell>
                      <Cell>simple</Cell>
                      <Cell>Default</Cell>
                      <Cell>{r[2]}</Cell>
                      <Cell>{r[3]}</Cell>
                      <Cell>{r[4]}</Cell>
                      <Cell>{r[5]}</Cell>
                    </React.Fragment>
                  ))}
                </Grid>
                <SheetStrip>
                  <NavButton><Tri dir="l" color="#8a8a8a" /></NavButton>
                  <NavButton><Tri dir="l" color="#8a8a8a" /></NavButton>
                  <NavButton><Tri dir="r" color="#8a8a8a" /></NavButton>
                  <NavButton><Tri dir="r" color="#8a8a8a" /></NavButton>
                  <TabArea>
                    <TabShape />
                    <Tab>Sheet1</Tab>
                  </TabArea>
                  <HScrollSpacer />
                  <ScrollButton><Tri dir="l" color="#777" /></ScrollButton>
                  <ScrollThumb $w={84} $h={15} />
                  <HTrack>
                    <ScrollButton><Tri dir="r" /></ScrollButton>
                    <BlackEdge />
                  </HTrack>
                </SheetStrip>
              </GridWrap>
              <VCol>
                <VScroll>
                  <ScrollButton><Tri dir="u" color="#777" /></ScrollButton>
                  <ScrollThumb $w={15} $h={16} />
                  <VTrack />
                  <ScrollButton><Tri dir="d" /></ScrollButton>
                </VScroll>
              </VCol>
            </SheetArea>
          </Main>
          <Splitter>
            <Tri dir="r" />
            <SplitDots />
            <Tri dir="r" />
          </Splitter>
          <Sidebar>
            <MenuLinesIcon />
            <SideRule />
            <SideIcon><CubeIcon /></SideIcon>
            <SideIcon><StylesIcon /></SideIcon>
            <SideIcon><GalleryIcon /></SideIcon>
            <SideIcon><OrangeCompass /></SideIcon>
            <SideIcon><FunctionsIcon /></SideIcon>
          </Sidebar>
        </Workspace>
        <StatusBar>
          <StatusCell $w={388} $pl={9}>Sheet 1 / 1</StatusCell>
          <StatusCell $w={421} $pl={5}>Default</StatusCell>
          <StatusCell $w={32} $pl={3}>STD</StatusCell>
          <StatusCell $w={16} $pl={4}>*</StatusCell>
          <StatusCell $w={28}>{''}</StatusCell>
          <StatusCell $w={411} $center>Sum=0</StatusCell>
          <StatusCell $w={153}>
            <ZoomRound $ml={4}>−</ZoomRound>
            <ZoomTrack><ZoomThumb /></ZoomTrack>
            <ZoomRound $mr={9}>+</ZoomRound>
          </StatusCell>
          <StatusCell $w={40} $pl={5} $noBorder>100 %</StatusCell>
        </StatusBar>
      </Window>
    </>
  );
}
